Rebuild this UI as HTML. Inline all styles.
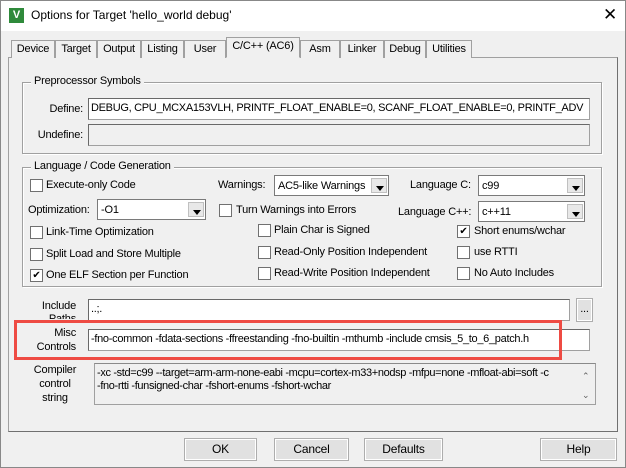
<!DOCTYPE html>
<html><head><style>
*{box-sizing:border-box;margin:0;padding:0}
body{width:626px;height:468px;background:#f0f0f0;font-family:"Liberation Sans",sans-serif;font-size:11px;letter-spacing:-0.2px;color:#000;position:relative;overflow:hidden}
.a{position:absolute;white-space:nowrap}
.win{position:absolute;left:0;top:0;width:626px;height:468px;border:1px solid #888}
.tb{position:absolute;left:1px;top:1px;width:624px;height:30px;background:#fff}
.tab{position:absolute;top:40px;height:18px;border:1px solid #a0a0a0;border-bottom:none;background:#f0f0f0;text-align:center;line-height:16px}
.panel{position:absolute;left:8px;top:57px;width:610px;height:375px;border:1px solid #a0a0a0;border-right-color:#707070;border-bottom-color:#707070}
.grp{position:absolute;border:1px solid #a0a0a0;box-shadow:inset 1px 1px 0 #fff,1px 1px 0 #fff}
.gt{position:absolute;top:-8px;left:8px;background:#f0f0f0;padding:0 3px}
.in{position:absolute;background:#fff;border:1px solid #a0a0a0;border-top-color:#696969;border-left-color:#696969;padding-left:2px;line-height:19px;white-space:nowrap;overflow:hidden;letter-spacing:-0.3px}
.cb{position:absolute;width:13px;height:13px;background:#fff;border:1px solid #707070}
.cmb{position:absolute;background:#fff;border:1px solid #7a7a7a;padding-left:3px;line-height:20px;overflow:hidden;white-space:nowrap}
.cmb i{position:absolute;right:1px;top:2px;bottom:2px;width:16px;background:#e8e8e8;border:1px solid #c0c0c0}
.cmb i:after{content:"";position:absolute;left:4px;top:7px;border:4px solid transparent;border-top:5px solid #000;border-bottom:none}
.btn{position:absolute;top:438px;height:23px;border:1px solid #adadad;background:#e1e1e1;text-align:center;line-height:21px;box-shadow:inset 0 0 0 1px #fff;font-size:12px}
.r{text-align:right}
.ck{font-size:10px;line-height:11px;text-align:center}
</style></head><body>
<div class="win"></div>
<div class="tb"></div>
<div class="a" style="left:9px;top:8px;width:15px;height:15px;background:#2f8a3b;color:#fff;font-size:11px;font-weight:bold;line-height:15px;text-align:center">V</div>
<div class="a" style="left:31px;top:8px;font-size:12px;letter-spacing:0">Options for Target 'hello_world debug'</div>
<div class="a" style="left:603px;top:5px;font-size:17px;letter-spacing:0">✕</div>

<div class="panel"></div>
<div class="tab" style="left:11px;width:44px">Device</div>
<div class="tab" style="left:55px;width:42px">Target</div>
<div class="tab" style="left:97px;width:44px">Output</div>
<div class="tab" style="left:141px;width:43px">Listing</div>
<div class="tab" style="left:184px;width:42px">User</div>
<div class="tab" style="left:226px;width:74px;top:37px;height:21px;border-color:#a0a0a0;border-bottom:1px solid #f0f0f0">C/C++ (AC6)</div>
<div class="tab" style="left:300px;width:40px">Asm</div>
<div class="tab" style="left:340px;width:44px">Linker</div>
<div class="tab" style="left:384px;width:42px">Debug</div>
<div class="tab" style="left:426px;width:46px">Utilities</div>

<div class="grp" style="left:22px;top:82px;width:580px;height:72px"><span class="gt">Preprocessor Symbols</span></div>
<div class="a r" style="left:20px;width:63px;top:103px">Define:</div>
<div class="in" style="left:88px;top:98px;width:502px;height:22px">DEBUG, CPU_MCXA153VLH, PRINTF_FLOAT_ENABLE=0, SCANF_FLOAT_ENABLE=0, PRINTF_ADV</div>
<div class="a r" style="left:20px;width:63px;top:129px">Undefine:</div>
<div class="in" style="left:88px;top:124px;width:502px;height:22px;background:#f0f0f0"></div>

<div class="grp" style="left:22px;top:167px;width:580px;height:120px"><span class="gt">Language / Code Generation</span></div>
<div class="cb" style="left:30px;top:179px"></div><div class="a" style="left:46px;top:179px">Execute-only Code</div>
<div class="a" style="left:218px;top:179px">Warnings:</div>
<div class="cmb" style="left:274px;top:175px;width:115px;height:21px">AC5-like Warnings<i></i></div>
<div class="a" style="left:410px;top:179px">Language C:</div>
<div class="cmb" style="left:478px;top:175px;width:107px;height:21px">c99<i></i></div>

<div class="a" style="left:28px;top:204px">Optimization:</div>
<div class="cmb" style="left:97px;top:199px;width:109px;height:21px">-O1<i></i></div>
<div class="cb" style="left:219px;top:204px"></div><div class="a" style="left:236px;top:204px">Turn Warnings into Errors</div>
<div class="a" style="left:398px;top:206px">Language C++:</div>
<div class="cmb" style="left:478px;top:201px;width:107px;height:21px">c++11<i></i></div>

<div class="cb" style="left:30px;top:226px"></div><div class="a" style="left:46px;top:226px">Link-Time Optimization</div>
<div class="cb" style="left:258px;top:224px"></div><div class="a" style="left:274px;top:224px">Plain Char is Signed</div>
<div class="cb ck" style="left:457px;top:225px">✔</div><div class="a" style="left:474px;top:225px">Short enums/wchar</div>

<div class="cb" style="left:30px;top:248px"></div><div class="a" style="left:46px;top:248px">Split Load and Store Multiple</div>
<div class="cb" style="left:258px;top:246px"></div><div class="a" style="left:274px;top:246px">Read-Only Position Independent</div>
<div class="cb" style="left:457px;top:246px"></div><div class="a" style="left:474px;top:246px">use RTTI</div>

<div class="cb ck" style="left:30px;top:269px">✔</div><div class="a" style="left:46px;top:269px">One ELF Section per Function</div>
<div class="cb" style="left:258px;top:267px"></div><div class="a" style="left:274px;top:267px">Read-Write Position Independent</div>
<div class="cb" style="left:457px;top:267px"></div><div class="a" style="left:474px;top:267px">No Auto Includes</div>

<div class="a r" style="left:20px;width:56px;top:300px">Include</div>
<div class="a r" style="left:20px;width:56px;top:313px;height:6px;overflow:hidden">Paths</div>
<div class="in" style="left:88px;top:299px;width:482px;height:22px">..;.</div>
<div class="btn" style="left:576px;top:298px;width:17px;height:24px;line-height:20px;font-size:11px">...</div>

<div class="a r" style="left:20px;width:56px;top:327px">Misc</div>
<div class="a r" style="left:20px;width:56px;top:341px">Controls</div>
<div class="in" style="left:88px;top:329px;width:502px;height:22px">-fno-common  -fdata-sections  -ffreestanding  -fno-builtin  -mthumb -include cmsis_5_to_6_patch.h</div>
<div class="a" style="left:14px;top:320px;width:548px;height:40px;border:3px solid #ee4b43"></div>

<div class="a" style="left:30px;width:50px;top:363px;text-align:center;line-height:14px;white-space:normal">Compiler control string</div>
<div class="a" style="left:94px;top:363px;width:502px;height:42px;border:1px solid #a0a0a0;border-top-color:#8a8a8a;padding:3px 0 0 2px;line-height:13px;letter-spacing:-0.35px;overflow:hidden">-xc -std=c99 --target=arm-arm-none-eabi -mcpu=cortex-m33+nodsp -mfpu=none -mfloat-abi=soft -c<br>-fno-rtti -funsigned-char -fshort-enums -fshort-wchar</div>
<div class="a" style="left:582px;top:371px;font-size:9px;color:#606060">&#8963;</div>
<div class="a" style="left:582px;top:390px;font-size:9px;color:#606060">&#8964;</div>

<div class="btn" style="left:184px;width:73px">OK</div>
<div class="btn" style="left:274px;width:75px">Cancel</div>
<div class="btn" style="left:364px;width:79px">Defaults</div>
<div class="btn" style="left:540px;width:77px">Help</div>
</body></html>
